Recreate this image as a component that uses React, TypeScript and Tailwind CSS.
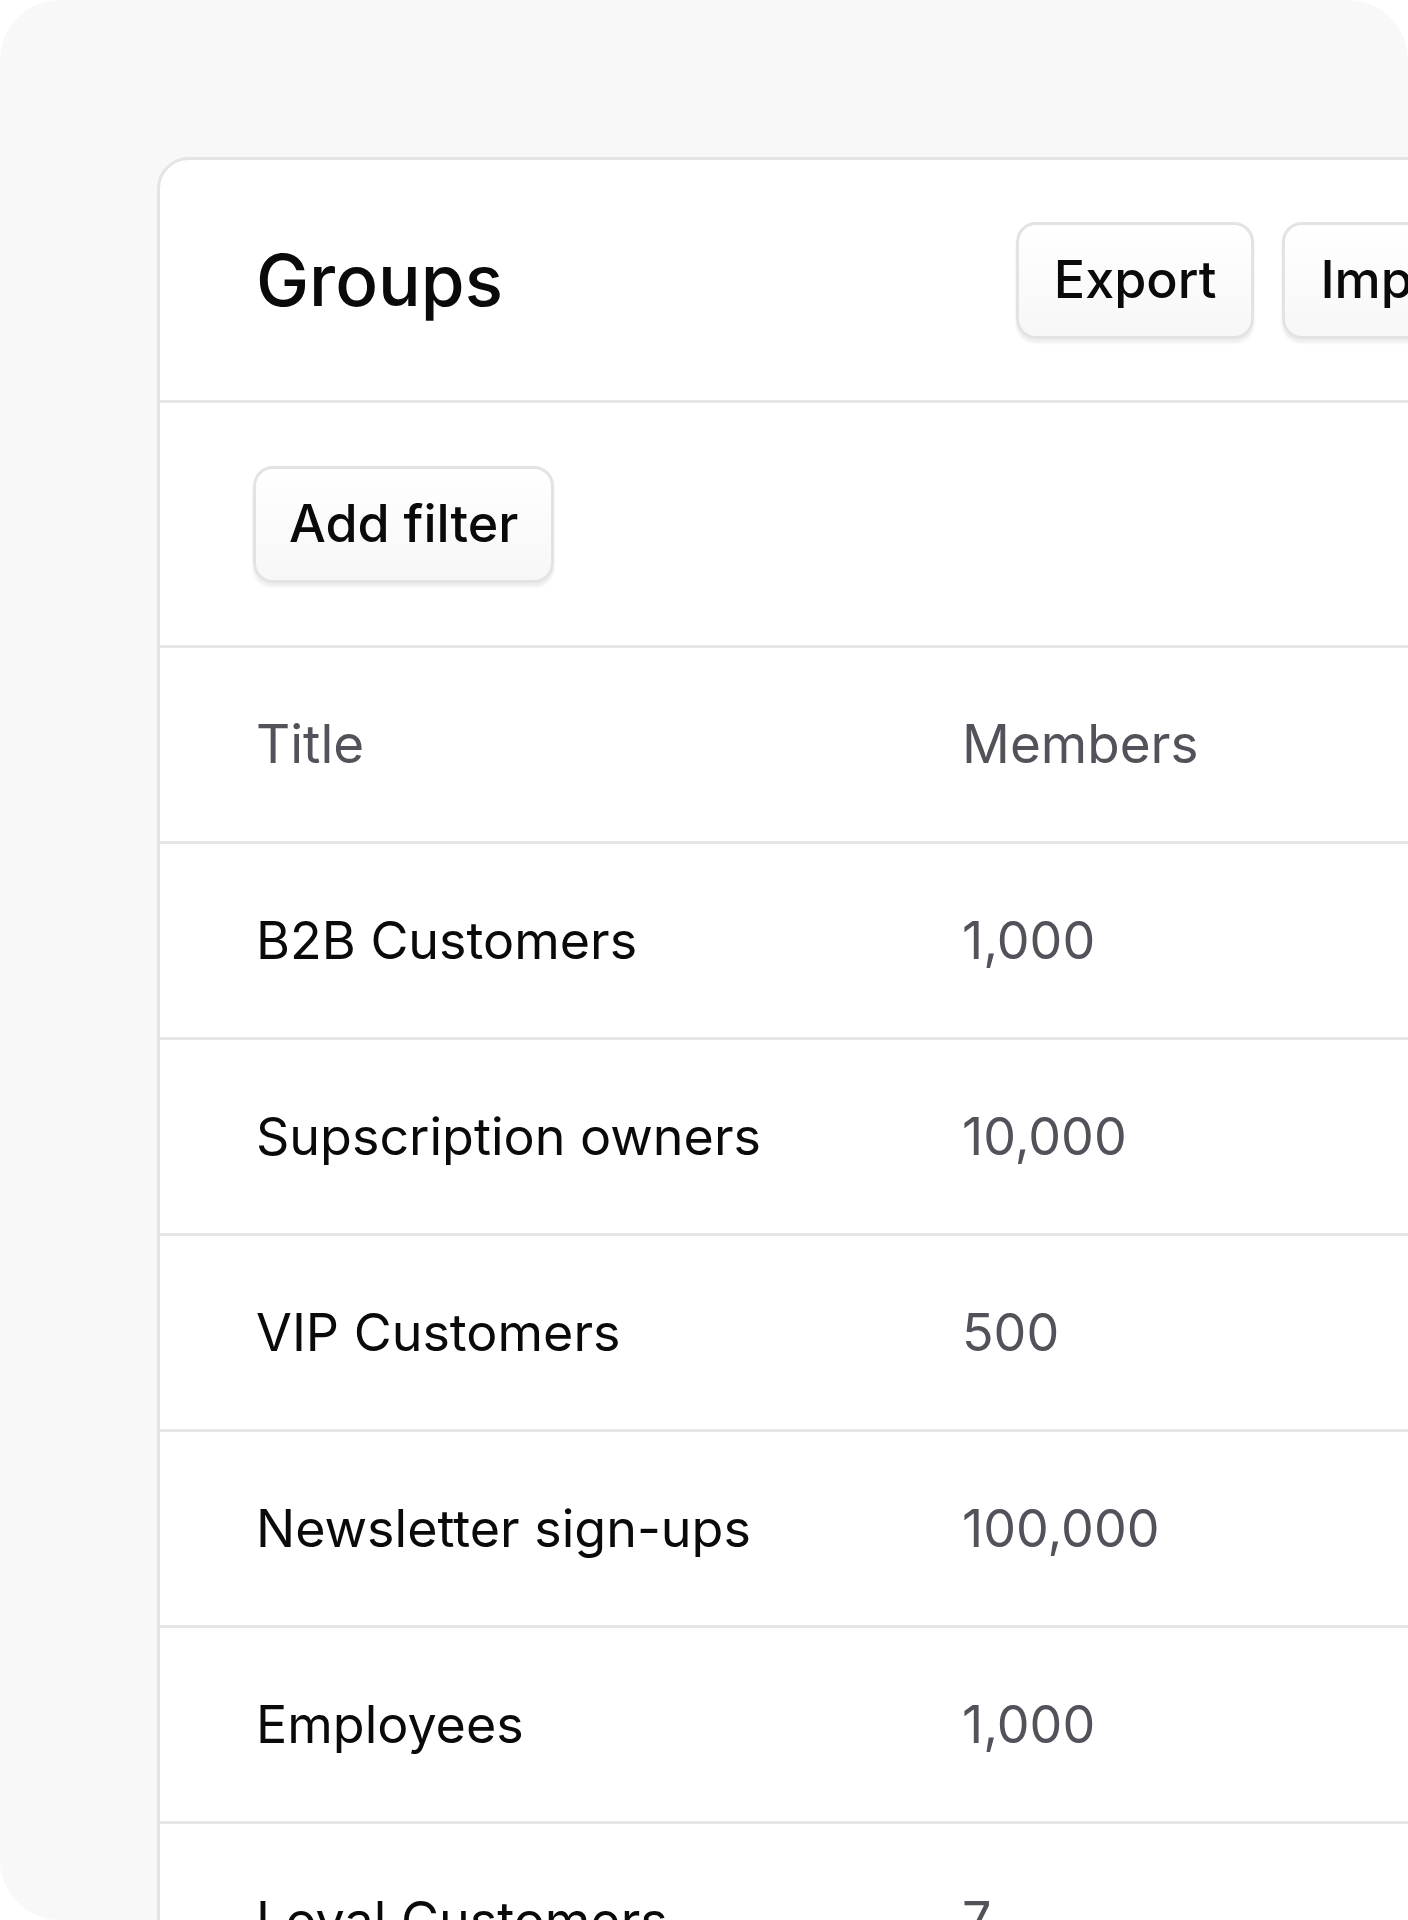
import React from 'react';

type GroupRow = { title: string; members: string };

const rows: GroupRow[] = [
  { title: 'B2B Customers', members: '1,000' },
  { title: 'Supscription owners', members: '10,000' },
  { title: 'VIP Customers', members: '500' },
  { title: 'Newsletter sign-ups', members: '100,000' },
  { title: 'Employees', members: '1,000' },
  { title: 'Loyal Customers', members: '7' },
];

const Button: React.FC<{ label: string; className?: string }> = ({ label, className = '' }) => (
  <button
    className={`h-[117px] rounded-[20px] border-[3px] border-[#e3e3e3] bg-gradient-to-b from-white to-[#f7f7f7]
                text-[52px] font-medium text-[#0a0a0a] shadow-[0_4px_3px_rgba(0,0,0,0.07)] ${className}`}
  >
    {label}
  </button>
);

const App: React.FC = () => {
  return (
    <div className="min-h-screen bg-white" style={{ fontFamily: 'Inter, "Noto Sans", sans-serif' }}>
      <div className="h-[1920px] w-[1408px] overflow-hidden rounded-[60px] bg-[#f8f8f8] pl-[157px] pt-[157px]">
        <div className="w-[1463px] rounded-[32px] border-[3px] border-[#e4e4e4] bg-white">
          {/* Header */}
          <div className="flex h-[243px] items-center justify-between border-b-[3px] border-[#e6e6e6] px-[96px]">
            <h1 className="text-[71px] font-medium text-[#0a0a0a]">Groups</h1>
            <div className="flex gap-[28px]">
              <Button label="Export" className="px-[35px]" />
              <Button label="Import" className="px-[35px]" />
            </div>
          </div>

          {/* Filters */}
          <div className="flex h-[245px] items-center border-b-[3px] border-[#e6e6e6] px-[93px]">
            <Button label="Add filter" className="px-[33px]" />
          </div>

          {/* Table */}
          <div className="grid h-[196px] grid-cols-[706px_1fr] items-center border-b-[3px] border-[#e6e6e6] px-[96px] text-[53px] text-[#52525b]">
            <div>Title</div>
            <div>Members</div>
          </div>
          {rows.map(row => (
            <div
              key={row.title}
              className="grid h-[196px] grid-cols-[706px_1fr] items-center border-b-[3px] border-[#e6e6e6] px-[96px] text-[52px]"
            >
              <div className="text-[#0a0a0a]">{row.title}</div>
              <div className="text-[#52525b]">{row.members}</div>
            </div>
          ))}
        </div>
      </div>
    </div>
  );
};

export default App;
